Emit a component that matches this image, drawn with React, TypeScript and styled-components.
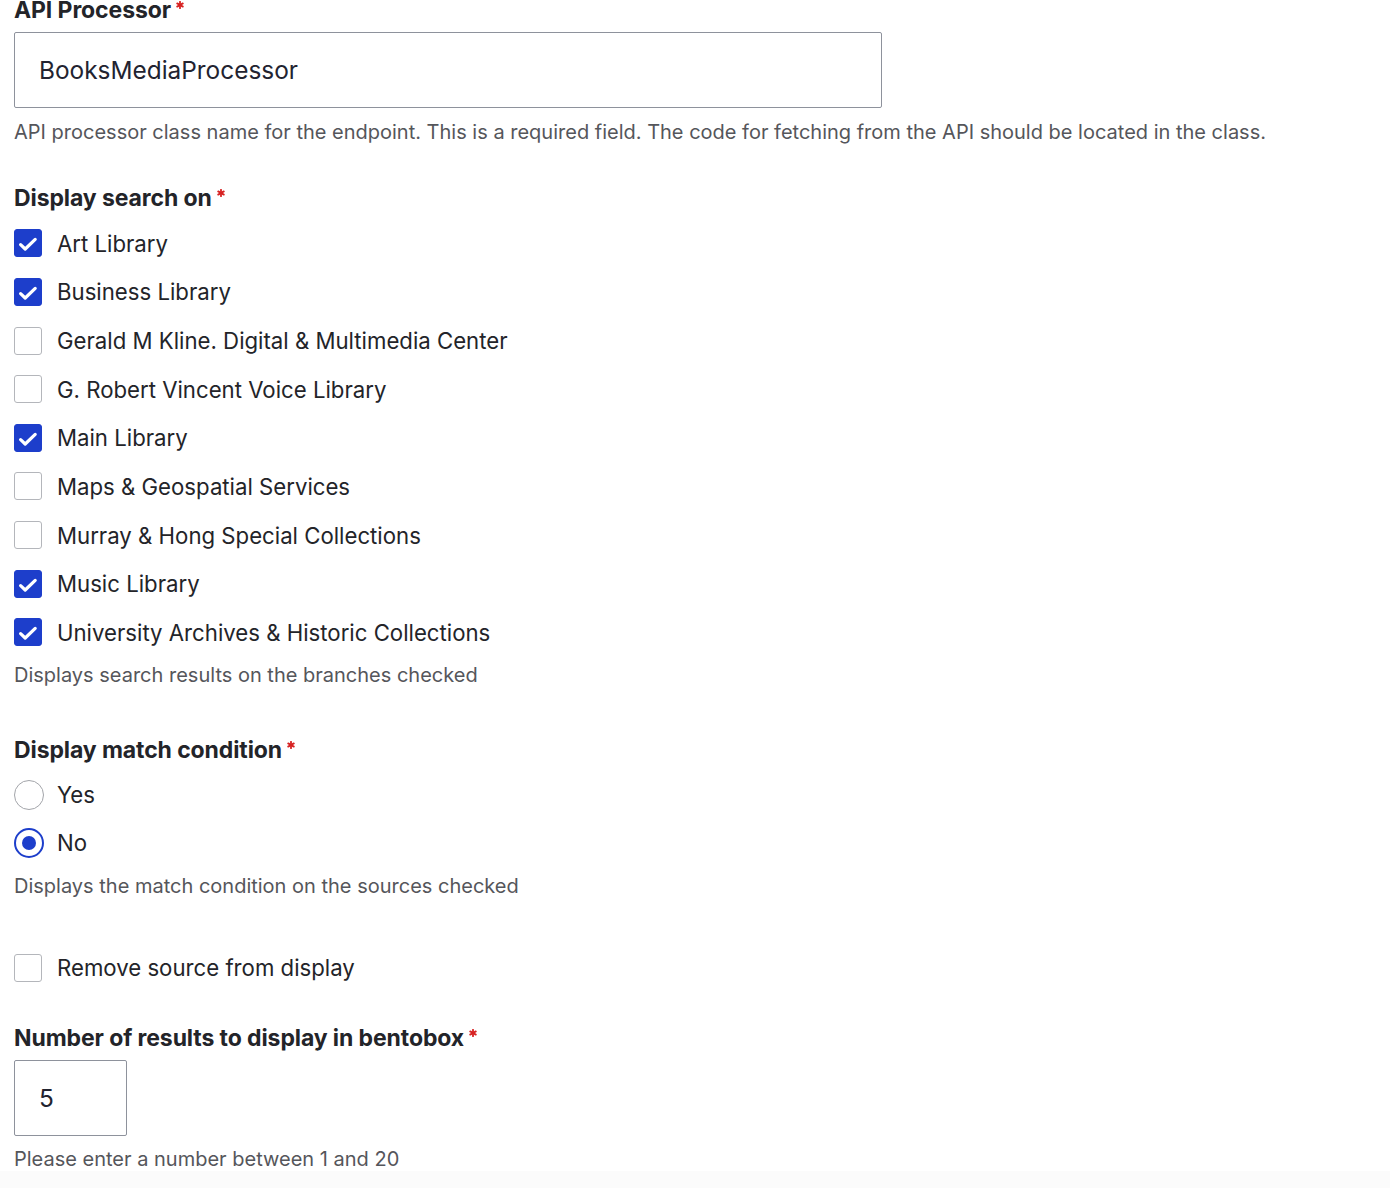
import { ReactElement } from "react";
import styled, { createGlobalStyle } from "styled-components";

const GlobalStyle = createGlobalStyle`
  html, body {
    margin: 0;
    padding: 0;
    background: #ffffff;
  }
  body {
    font-family: Inter, "Liberation Sans", Arial, sans-serif;
    color: #232429;
    -webkit-font-smoothing: antialiased;
  }
`;

const Page = styled.div`
  display: flex;
  flex-direction: column;
  min-height: 1188px;
  overflow: hidden;
`;

const Form = styled.form`
  display: flex;
  flex-direction: column;
  padding: 0 14px;
  margin-top: -4px;
`;

const FormItem = styled.div<{ $top?: number }>`
  display: flex;
  flex-direction: column;
  margin-top: ${({ $top }) => $top ?? 0}px;
`;

const Label = styled.div`
  display: flex;
  align-items: flex-start;
  font-size: 23px;
  line-height: 28px;
  font-weight: 700;
  color: #232429;
  letter-spacing: -0.1px;
`;

const Required = styled.span`
  display: inline-flex;
  margin-left: 5px;
  margin-top: 5px;
  color: #d72222;
`;

const TextInput = styled.div<{ $width: number }>`
  box-sizing: border-box;
  width: ${({ $width }) => $width}px;
  height: 76px;
  margin-top: 8px;
  padding: 0 24px;
  display: flex;
  align-items: center;
  border: 1px solid #8e929c;
  border-radius: 2px;
  font-size: 24.4px;
  color: #222330;
`;

const Description = styled.div<{ $top: number }>`
  margin-top: ${({ $top }) => $top}px;
  font-size: 20px;
  line-height: 24px;
  color: #55565b;
`;

const Options = styled.div<{ $top: number; $row: number }>`
  display: flex;
  flex-direction: column;
  margin-top: ${({ $top }) => $top}px;

  & > label {
    height: ${({ $row }) => $row}px;
  }
`;

const Option = styled.label`
  display: flex;
  align-items: center;
  gap: 15px;
  font-size: 22.2px;
  color: #232429;
`;

const Box = styled.span<{ $checked: boolean }>`
  box-sizing: border-box;
  flex: 0 0 28px;
  width: 28px;
  height: 28px;
  display: flex;
  align-items: center;
  justify-content: center;
  border-radius: 3px;
  background: ${({ $checked }) => ($checked ? "#1d3ecb" : "#ffffff")};
  border: 1px solid ${({ $checked }) => ($checked ? "#1d3ecb" : "#b4b6bb")};
`;

const Radio = styled.span<{ $checked: boolean }>`
  box-sizing: border-box;
  flex: 0 0 30px;
  width: 30px;
  height: 30px;
  margin-right: -2px;
  border-radius: 50%;
  display: flex;
  align-items: center;
  justify-content: center;
  border: ${({ $checked }) =>
    $checked ? "2.5px solid #1d3ecb" : "1px solid #a3a5aa"};

  &::after {
    content: "";
    display: ${({ $checked }) => ($checked ? "block" : "none")};
    width: 14px;
    height: 14px;
    border-radius: 50%;
    background: #1d3ecb;
  }
`;

const Footer = styled.div`
  flex: 1;
  background: #fbfbfb;
`;

const Star = (): ReactElement => (
  <Required>
    <svg width="8" height="8" viewBox="0 0 8 8" aria-hidden="true">
      <g stroke="#d72222" strokeWidth="1.8" strokeLinecap="round">
        <line x1="4" y1="0.8" x2="4" y2="7.2" />
        <line x1="1.2" y1="2.4" x2="6.8" y2="5.6" />
        <line x1="1.2" y1="5.6" x2="6.8" y2="2.4" />
      </g>
    </svg>
  </Required>
);

const Check = (): ReactElement => (
  <svg width="26" height="26" viewBox="0 0 26 26" aria-hidden="true">
    <path
      d="M5.6 14.6 L10.2 19 L20.2 9.4"
      fill="none"
      stroke="#ffffff"
      strokeWidth="3.2"
      strokeLinecap="round"
      strokeLinejoin="round"
    />
  </svg>
);

const Checkbox = ({ checked, label }: { checked: boolean; label: string }): ReactElement => (
  <Option>
    <Box $checked={checked}>{checked && <Check />}</Box>
    {label}
  </Option>
);

const branches: { label: string; checked: boolean }[] = [
  { label: "Art Library", checked: true },
  { label: "Business Library", checked: true },
  { label: "Gerald M Kline. Digital & Multimedia Center", checked: false },
  { label: "G. Robert Vincent Voice Library", checked: false },
  { label: "Main Library", checked: true },
  { label: "Maps & Geospatial Services", checked: false },
  { label: "Murray & Hong Special Collections", checked: false },
  { label: "Music Library", checked: true },
  { label: "University Archives & Historic Collections", checked: true },
];

export default function App(): ReactElement {
  return (
    <Page>
      <GlobalStyle />
      <Form>
        <FormItem>
          <Label>
            API Processor
            <Star />
          </Label>
          <TextInput $width={868}>BooksMediaProcessor</TextInput>
          <Description $top={12}>
            API processor class name for the endpoint. This is a required field. The code for
            fetching from the API should be located in the class.
          </Description>
        </FormItem>

        <FormItem $top={40}>
          <Label>
            Display search on
            <Star />
          </Label>
          <Options $top={7} $row={48.625}>
            {branches.map((b) => (
              <Checkbox key={b.label} checked={b.checked} label={b.label} />
            ))}
          </Options>
          <Description $top={6}>Displays search results on the branches checked</Description>
        </FormItem>

        <FormItem $top={49}>
          <Label>
            Display match condition
            <Star />
          </Label>
          <Options $top={7} $row={48}>
            <Option>
              <Radio $checked={false} />
              Yes
            </Option>
            <Option>
              <Radio $checked={true} />
              No
            </Option>
          </Options>
          <Description $top={7}>Displays the match condition on the sources checked</Description>
        </FormItem>

        <FormItem $top={46}>
          <Options $top={0} $row={48}>
            <Checkbox checked={false} label="Remove source from display" />
          </Options>
        </FormItem>

        <FormItem $top={32}>
          <Label>
            Number of results to display in bentobox
            <Star />
          </Label>
          <TextInput $width={113}>5</TextInput>
          <Description $top={11}>Please enter a number between 1 and 20</Description>
        </FormItem>
      </Form>
      <Footer />
    </Page>
  );
}
